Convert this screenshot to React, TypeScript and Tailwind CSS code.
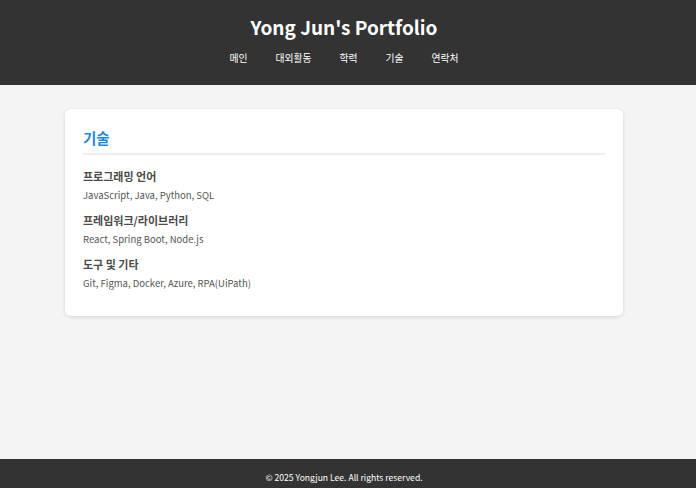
const skills = [
  { title: "프로그래밍 언어", items: "JavaScript, Java, Python, SQL" },
  { title: "프레임워크/라이브러리", items: "React, Spring Boot, Node.js" },
  { title: "도구 및 기타", items: "Git, Figma, Docker, Azure, RPA(UiPath)" },
];

const menu = ["메인", "대외활동", "학력", "기술", "연락처"];

export default function App() {
  return (
    <div className="min-h-screen flex flex-col bg-[#f4f4f4] font-['Noto_Sans_CJK_KR',sans-serif] text-[#333]">
      <header className="bg-[#333] text-white text-center pt-[15px] pb-[20px] pr-[8px]">
        <h1 className="text-[19px] font-bold leading-[24px]">Yong Jun's Portfolio</h1>
        <nav className="mt-[12px] flex justify-center gap-[28px] text-[9.8px] leading-[14px]">
          {menu.map((m) => (
            <a key={m} className="text-white">
              {m}
            </a>
          ))}
        </nav>
      </header>

      <main className="flex-1 pt-[24px] pl-[65px] pr-[73px]">
        <section className="bg-white rounded-[6px] shadow-[0_1px_4px_rgba(0,0,0,0.12)] px-[18px] pt-[19px] pb-[26px]">
          <h2 className="text-[#1e88e5] text-[14.5px] font-bold leading-[20px] pb-[5px] border-b-2 border-[#eee]">
            기술
          </h2>
          <div className="mt-[13px] flex flex-col gap-[10px]">
            {skills.map((s) => (
              <div key={s.title}>
                <h3 className="text-[11px] font-bold text-[#4a4a4a] leading-[16px]">{s.title}</h3>
                <p className="mt-[4px] text-[9.5px] text-[#555] leading-[14px]">{s.items}</p>
              </div>
            ))}
          </div>
        </section>
      </main>

      <footer className="bg-[#333] text-white text-center text-[8.6px] leading-[12px] pt-[12px] pb-[5px] pr-[8px]">
        © 2025 Yongjun Lee. All rights reserved.
      </footer>
    </div>
  );
}
